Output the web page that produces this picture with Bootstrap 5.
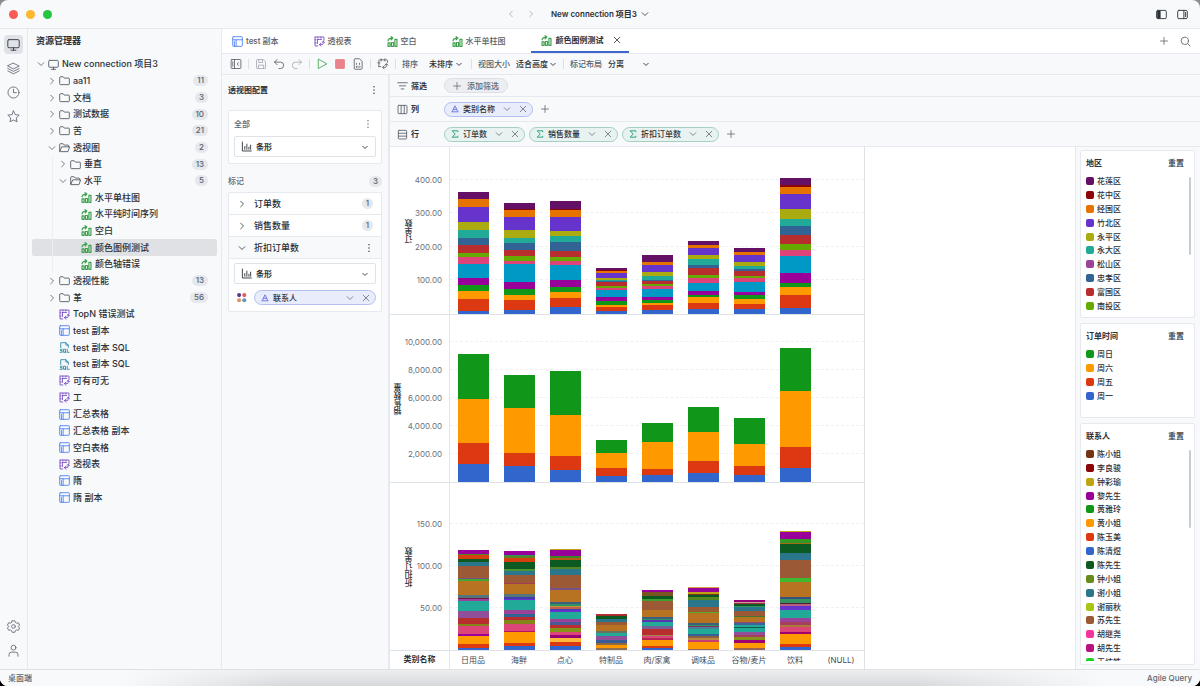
<!DOCTYPE html>
<html lang="zh-CN">
<head>
<meta charset="utf-8">
<meta name="viewport" content="width=device-width, initial-scale=1">
<title>Agile Query</title>
<link href="https://cdn.jsdelivr.net/npm/bootstrap@5.3.0/dist/css/bootstrap.min.css" rel="stylesheet">
<style>
:root{--panel:#f7f9fb;--line:#e6e9ed;--ink:#2b3038;--soft:#5f6670}
html,body{height:100%}
body{font:500 8px/12px Inter,"Noto Sans CJK SC",sans-serif;color:var(--ink);background:linear-gradient(#8b8b8b,#8b8b8b 50%,#000 50%);overflow:hidden}
button,select{font:inherit;color:inherit;border:0;background:none;padding:0}
.ic{width:11px;height:11px;flex:none;fill:none;stroke:currentColor;stroke-width:1.3;stroke-linecap:round;stroke-linejoin:round;display:block}
.ic-s{width:8px;height:8px;stroke-width:.8}.ic-l{width:13px;height:13px;stroke-width:1.1}
.app{height:100vh;background:var(--panel);border-radius:8px;overflow:hidden}
.line-b{border-bottom:1px solid var(--line)}.line-r{border-right:1px solid var(--line)}
.titlebar{height:29px;padding:0 12px 0 9px}
.titlebar nav{padding-right:9px}
.project{font-weight:600}
.faint{color:#a3a8b0}
.light{width:9px;height:9px;border-radius:50%}
.fw-b{font-weight:700}.soft{color:var(--soft)}
.side-w{flex:1 1 0}
.rail{width:28px;padding:6px 0 9px;gap:5px;color:#666c76}
.rail button{width:19px;height:19px;border-radius:4px;display:grid;place-items:center}
.rail .on{background:#dfe2e6;color:#30353d}
.explorer{width:194px;padding:6px 4px 0}
.explorer h2,.config h2,.legend h2{font-size:9px;font-weight:700;margin:0;line-height:12px}
.tree{display:grid;grid-auto-rows:1fr;height:450px;margin:9px 0 0}
.tree button{text-align:left;border-radius:2px;gap:3px;width:100%;position:relative;font-size:9px}
.tree .on{background:#dfe1e5}
.tree .deep::before{content:"";position:absolute;left:20px;top:0;bottom:0;border-left:1px solid #eceef1}
.tree .ic{color:#555b64}
.pill{background:#e5e8ec;border-radius:6px;color:#59606a;padding:0 4px;line-height:11px;font-size:8px;min-width:11px;text-align:center}
.tree .pill{margin-left:auto;margin-right:9px}
.c-blue{color:#4d82f3!important}.c-vio{color:#7a4fc4!important}.c-grn{color:#3da14c!important;stroke-width:1.7}.c-sql{color:#3289a5!important}
.tabs{height:25px;background:#fff}
#tabs>button{height:24px;gap:3px;padding:0 25px 0 10px;color:#565c66}
.tab-on{border-bottom:2px solid #3f68cf}
.tab-on button:first-child{gap:4px;height:22px;padding:0 9px 0 10px}
.tools{height:21px;color:#565c66;gap:6px;padding-left:8px}
.tools .ic{width:12px;height:12px;stroke-width:1.1}
.vsep{width:1px;height:10px;background:#dcdfe4}
.pick{appearance:none;-webkit-appearance:none;color:var(--ink);background:url("data:image/svg+xml,%3Csvg xmlns='http://www.w3.org/2000/svg' viewBox='0 0 8 8' fill='none' stroke='%23444a53'%3E%3Cpath d='M1.500 3L4 5.500L6.500 3'/%3E%3C/svg%3E") no-repeat right center/8px 8px}
#s1{width:34px;margin:0 2px 0 5px}#s2{width:41px}#s3{width:42px}
.config{width:168px;padding:9px 6px;border-right:2px solid var(--line)}
.config h2{font-size:8px}
.box{background:#fff;border:1px solid var(--line);border-radius:2px}
.field{position:relative}
.field .ic{position:absolute;left:7px;top:5px}
.field .pick{width:100%;height:21px;border:1px solid #dfe2e7;border-radius:2px;padding-left:21px;background-position:right 6px center;font-weight:600}
.mrow{height:22px;padding:0 8px 0 9px;border-bottom:1px solid var(--line);font-size:9px}
.shelf{padding:0 8px 0 7px;gap:4px;height:25px}
.shelf-low{height:22px}
.shelf-name{width:43px;gap:3px}
.tag{height:15px;border-radius:8px;border:1px solid;padding:0 5px 0 6px;gap:4px}
.tag-sum{background:#e8f3f1;border-color:#a5cfc5}.tag-dim{background:#e9edfb;border-color:#b3bff0}
.tag-add{background:#eceef2;border-color:#dcdfe5;padding:0 8px;gap:6px}
.tag .ic-s{color:#656c76}.tag .c-sum{color:#2fa37c;stroke-width:1}.tag .c-dim{color:#5560e0}
.chart{width:475px;border-right:1px solid #dfe1e5;color:#6a707a}
.facet{flex:1 1 0;min-height:0;border-bottom:1px solid #dfe1e5}
.axis{width:60px;padding-right:7px;border-right:1px solid #e4e6ea;font-weight:400}
.axis-name{writing-mode:vertical-rl;transform:rotate(180deg);color:var(--ink);font-weight:500}
.ticks{position:relative;width:27px;height:100%}.ticks.wide{width:38px}
.ticks span{position:absolute;right:0;transform:translateY(50%)}
.plot{position:relative;display:grid;grid-template-columns:repeat(9,1fr);flex:1}
.rule{position:absolute;left:0;right:0;border-top:1px dashed #eef0f2}
.rod{width:31px;align-self:end;justify-self:center;display:flex;flex-direction:column;position:relative}
.rod i{flex-basis:0;min-height:0}
.cats{height:18px}
.cats .axis{line-height:17px;padding:0;font-weight:600;color:var(--ink)}
.cats ol{display:grid;grid-template-columns:repeat(9,1fr);flex:1;color:#454b55;font-weight:400}
.legend{width:125px;padding:3px 5px 4px 4px;gap:5px;border-left:1px solid var(--line);background:var(--panel)}
.legend section{padding:6px 10px 3px 5px;position:relative}
.legend h2{font-size:8px}
.key-view{overflow:hidden;min-height:0;margin-top:5px}
.keys{display:grid;grid-auto-rows:1fr}
.keys li{gap:3px}
.sw{width:8px;height:8px;border-radius:2px;flex:none}
.thumb{position:absolute;right:3px;top:26px;width:2px;height:78px;border-radius:1px;background:#c9ccd1}
.status{height:17px;padding:0 8px;color:var(--soft);border-top:1px solid #dfe1e5;background:linear-gradient(90deg,#f8f9fb 10%,transparent 24%,transparent 76%,#f8f9fb 92%),linear-gradient(#eceef0,#d6d8db)}
</style>
</head>
<body>
<svg width="0" height="0" class="position-absolute">
<symbol id="down" viewBox="0 0 8 8"><path d="M1.2 2.700L4 5.500L6.800 2.700"/></symbol>
<symbol id="right" viewBox="0 0 8 8"><path d="M2.700 1.200L5.500 4L2.700 6.800"/></symbol>
<symbol id="left" viewBox="0 0 8 8"><path d="M5.300 1.200L2.500 4L5.300 6.800"/></symbol>
<symbol id="x" viewBox="0 0 8 8"><path d="M1.200 1.200L6.800 6.800M6.800 1.200L1.200 6.800"/></symbol>
<symbol id="plus" viewBox="0 0 8 8"><path d="M4 .5V7.500M.5 4H7.500"/></symbol>
<symbol id="monitor" viewBox="0 0 16 16"><rect x="1" y="2" width="14" height="10" rx="1.500"/><path d="M8 12v3M5 15h6"/></symbol>
<symbol id="layers" viewBox="0 0 16 16"><path d="M8 1.500L15 5L8 8.500L1 5ZM1 8L8 11.500L15 8M1 11L8 14.500L15 11"/></symbol>
<symbol id="clock" viewBox="0 0 16 16"><circle cx="8" cy="8" r="6.800"/><path d="M8 4V8.200H11.500"/></symbol>
<symbol id="star" viewBox="0 0 16 16"><path d="M8 1.200L10.100 5.700L15 6.300L11.400 9.700L12.300 14.600L8 12.200L3.700 14.600L4.600 9.700L1 6.300L5.900 5.700Z"/></symbol>
<symbol id="gear" viewBox="0 0 16 16"><path d="M6.300 1h3.400l.6 2 1.500.9 2.100-.5 1.600 2.800L14 7.700v.7l1.500 1.500-1.600 2.800-2.100-.5-1.500.9-.6 2H6.300l-.6-2-1.500-.9-2.100.5L.5 9.900 2 8.400v-.7L.5 6.200l1.600-2.800 2.100.5L5.700 3Z"/><circle cx="8" cy="8" r="2.300"/></symbol>
<symbol id="user" viewBox="0 0 16 16"><circle cx="8" cy="4.500" r="3"/><path d="M2.500 15V13a3 3 0 0 1 3-3h5a3 3 0 0 1 3 3v2"/></symbol>
<symbol id="folder" viewBox="0 0 16 16"><path d="M1 3.500a1 1 0 0 1 1-1h4l1.700 2H14a1 1 0 0 1 1 1V13a1 1 0 0 1-1 1H2a1 1 0 0 1-1-1Z"/></symbol>
<symbol id="open" viewBox="0 0 16 16"><path d="M1 13V3.500a1 1 0 0 1 1-1h4l1.700 2H13a1 1 0 0 1 1 1V7M1.200 13.500L4 7h11.500L13 14H2a1 1 0 0 1-1-1"/></symbol>
<symbol id="bars" viewBox="0 0 16 16"><path d="M1.500 10v5h3v-5ZM6.500 9.500V15h3V9.500ZM11.500 5V15h3V5ZM1.500 7C2 4 4 3 8 3M6 1L8.500 3L6 5.500"/></symbol>
<symbol id="pivot" viewBox="0 0 16 16"><path d="M1.500 1.500H14.500V6.500M1.500 1.500V14.500H5.500M5 5H11M5 5V11M1.500 5.500H3M1.500 10H3M5.500 1.500V3M10 1.500V3M8 12.500h3.500a2 2 0 0 0 2-2V8M10 10.500L8 12.500L10 14.800M11.500 9.500L13.500 7.500L15.300 9.500"/></symbol>
<symbol id="grid" viewBox="0 0 16 16"><rect x="1" y="1" width="14" height="14" rx="1"/><path d="M1 5.500H15M6 5.500V15M3.500 8V15"/></symbol>
<symbol id="sql" viewBox="0 0 16 16"><path d="M2.500 8V1H10L13.500 4.500V8M10 1V4.500H13.500M4.500 10.500H2v2H4.500V15H1.500M7 10.500H9.500V15H7ZM9 14L10 15.500M12 10.500V15H14.800"/></symbol>
<symbol id="side" viewBox="0 0 16 16"><rect x="1.500" y="2" width="13" height="12" rx="1"/><path d="M6 2V14M11.500 6L9.500 8L11.500 10M3.700 5V11"/></symbol>
<symbol id="save" viewBox="0 0 16 16"><path d="M2 3a1 1 0 0 1 1-1H11L14 5V13a1 1 0 0 1-1 1H3a1 1 0 0 1-1-1ZM5 2V6H10V2M4.500 14V9.500H11.500V14"/></symbol>
<symbol id="undo" viewBox="0 0 16 16"><path d="M5.500 2L2 5.500L5.500 9M2 5.500H10a4 4 0 0 1 0 8.500H8"/></symbol>
<symbol id="redo" viewBox="0 0 16 16"><path d="M10.500 2L14 5.500L10.500 9M14 5.500H6a4 4 0 0 0 0 8.500H8"/></symbol>
<symbol id="play" viewBox="0 0 16 16"><path d="M3 2V14L14 8Z"/></symbol>
<symbol id="stop" viewBox="0 0 16 16"><rect x="2" y="2" width="12" height="12" rx="1" fill="#e8838b" stroke="#e8838b"/></symbol>
<symbol id="doc" viewBox="0 0 16 16"><path d="M3 2a1 1 0 0 1 1-1H10L13.500 4.500V14a1 1 0 0 1-1 1H4a1 1 0 0 1-1-1ZM6 7V8.500M10 7V8.500M6 11V12.500M8 11V12.500M10.500 11V12.500"/></symbol>
<symbol id="swap" viewBox="0 0 16 16"><path d="M2.500 11.500V3.500a1 1 0 0 1 1-1H13a1 1 0 0 1 1 1V6M2.500 11.500H5M5.500 1V4M10.500 1V4M1 6.500H4M8 12.500h2.500a2 2 0 0 0 2-2V8M9.500 10.500L7.500 12.500L9.500 14.500M10.500 9.500L12.500 7.500L14.500 9.500"/></symbol>
<symbol id="funnel" viewBox="0 0 16 16"><path d="M1 4H15M3.500 8.500H12.500M6 13H10"/></symbol>
<symbol id="cols" viewBox="0 0 16 16"><rect x="1.500" y="2" width="13" height="12" rx="1"/><path d="M6 2V14M10.500 2V14"/></symbol>
<symbol id="rows" viewBox="0 0 16 16"><rect x="2" y="2" width="12" height="12.500" rx="1"/><path d="M2 6.200H14M2 10.400H14"/></symbol>
<symbol id="find" viewBox="0 0 16 16"><circle cx="7" cy="7" r="5.300"/><path d="M11 11L14.500 14.500"/></symbol>
<symbol id="dots" viewBox="0 0 8 8"><path stroke-width="1.400" d="M4 .8V.81M4 4V4.010M4 7.200V7.210"/></symbol>
<symbol id="hist" viewBox="0 0 16 16"><path d="M2 1.500V14.500H15M5.500 8V12M8.500 4.500V12M11.500 9V12M14 6V12"/></symbol>
<symbol id="sigma" viewBox="0 0 8 8"><path d="M6.800 1.800V.8H1.200L4.200 4L1.200 7.200H6.800V6.200"/></symbol>
<symbol id="alpha" viewBox="0 0 8 8"><path d="M1.500 6L4 .8L6.500 6M2.400 4.300H5.600M.8 6.800H7.200"/></symbol>
<symbol id="palette" viewBox="0 0 16 16"><g stroke="none"><circle cx="4.500" cy="4.500" r="3" fill="#5d3a87"/><circle cx="12" cy="4.500" r="3" fill="#e05b63"/><circle cx="4.500" cy="12" r="3" fill="#e0916c"/><circle cx="12" cy="12" r="3" fill="#5f9bb5"/></g></symbol>
<symbol id="winl" viewBox="0 0 16 16"><rect x="1" y="2" width="14" height="12" rx="2"/><path d="M2 3H6V13H2Z" fill="currentColor"/></symbol>
<symbol id="winr" viewBox="0 0 16 16"><rect x="1" y="2" width="14" height="12" rx="2"/><path d="M10 2V14M12.500 5V11"/></symbol>
</svg>

<div class="app d-flex flex-column">
  <header class="titlebar line-b d-flex align-items-center flex-shrink-0">
    <div class="d-flex side-w gap-1"><span class="light me-1" style="background:#fb5b57"></span><span class="light me-1" style="background:#fdb92b"></span><span class="light" style="background:#24c53f"></span></div>
    <nav class="d-flex align-items-center gap-2" aria-label="导航">
      <button class="me-1 faint" aria-label="后退"><svg class="ic ic-s"><use href="#left"/></svg></button>
      <button class="me-2 faint" aria-label="前进"><svg class="ic ic-s"><use href="#right"/></svg></button>
      <button class="project d-flex align-items-center gap-1">New connection 项目3<svg class="ic ic-s"><use href="#down"/></svg></button>
    </nav>
    <div class="side-w"></div>
    <div class="d-flex" style="gap:10px"><button aria-label="左侧栏"><svg class="ic"><use href="#winl"/></svg></button><button aria-label="右侧栏"><svg class="ic"><use href="#winr"/></svg></button></div>
  </header>

  <div class="d-flex flex-fill" style="min-height:0">
    <nav class="rail line-r d-flex flex-column align-items-center flex-shrink-0" aria-label="活动栏">
      <button class="on" aria-label="资源"><svg class="ic ic-l"><use href="#monitor"/></svg></button>
      <button aria-label="图层"><svg class="ic ic-l"><use href="#layers"/></svg></button>
      <button aria-label="历史"><svg class="ic ic-l"><use href="#clock"/></svg></button>
      <button aria-label="收藏"><svg class="ic ic-l"><use href="#star"/></svg></button>
      <button class="mt-auto" aria-label="设置"><svg class="ic ic-l"><use href="#gear"/></svg></button>
      <button aria-label="用户"><svg class="ic ic-l"><use href="#user"/></svg></button>
    </nav>

    <aside class="explorer line-r flex-shrink-0">
      <h2 class="px-1">资源管理器</h2>
      <ul class="tree list-unstyled" id="tree"></ul>
    </aside>

    <main class="d-flex flex-column flex-fill" style="min-width:0">
      <div class="tabs line-b d-flex align-items-center flex-shrink-0">
        <div class="d-flex" id="tabs"></div>
        <div class="d-flex ms-auto align-items-center" style="gap:12px;padding-right:9px"><button class="soft" aria-label="新建"><svg class="ic ic-s"><use href="#plus"/></svg></button><button class="soft" aria-label="搜索"><svg class="ic"><use href="#find"/></svg></button></div>
      </div>
      <div class="tools line-b d-flex align-items-center flex-shrink-0">
        <button aria-label="面板"><svg class="ic"><use href="#side"/></svg></button><span class="vsep"></span>
        <button class="faint" aria-label="保存"><svg class="ic"><use href="#save"/></svg></button>
        <button aria-label="撤销"><svg class="ic"><use href="#undo"/></svg></button>
        <button class="faint" aria-label="重做"><svg class="ic"><use href="#redo"/></svg></button><span class="vsep"></span>
        <button style="color:#3da14c" aria-label="运行"><svg class="ic"><use href="#play"/></svg></button>
        <button aria-label="停止"><svg class="ic"><use href="#stop"/></svg></button>
        <button aria-label="日志"><svg class="ic"><use href="#doc"/></svg></button><span class="vsep"></span>
        <button aria-label="转置"><svg class="ic"><use href="#swap"/></svg></button><span class="vsep"></span>
        <label for="s1">排序</label><select class="pick" id="s1"><option>未排序</option></select><span class="vsep"></span>
        <label for="s2">视图大小</label><select class="pick" id="s2"><option>适合高度</option></select><span class="vsep"></span>
        <label for="s3">标记布局</label><select class="pick" id="s3"><option>分离</option></select>
      </div>

      <div class="d-flex flex-fill" style="min-height:0">
        <aside class="config flex-shrink-0">
          <div class="d-flex justify-content-between align-items-center pe-1"><h2>透视图配置</h2><button aria-label="更多"><svg class="ic ic-s"><use href="#dots"/></svg></button></div>
          <div class="box" style="margin-top:14px;padding:7px 5px 6px">
            <div class="d-flex justify-content-between align-items-center pe-1 soft" style="margin-bottom:6px">全部<button aria-label="更多"><svg class="ic ic-s"><use href="#dots"/></svg></button></div>
            <div class="field"><svg class="ic"><use href="#hist"/></svg><select class="pick" aria-label="图形"><option>条形</option></select></div>
          </div>
          <div class="d-flex justify-content-between align-items-center soft" style="margin:11px 0 5px">标记<span class="pill">3</span></div>
          <div class="box">
            <div class="mrow d-flex align-items-center"><button class="d-flex align-items-center gap-2"><svg class="ic ic-s"><use href="#right"/></svg>订单数</button><span class="pill ms-auto">1</span></div>
            <div class="mrow d-flex align-items-center"><button class="d-flex align-items-center gap-2"><svg class="ic ic-s"><use href="#right"/></svg>销售数量</button><span class="pill ms-auto">1</span></div>
            <div class="mrow d-flex align-items-center" style="background:var(--panel)"><button class="d-flex align-items-center gap-2"><svg class="ic ic-s"><use href="#down"/></svg>折扣订单数</button><button class="ms-auto" aria-label="更多"><svg class="ic ic-s"><use href="#dots"/></svg></button></div>
            <div style="padding:4px 5px 6px">
              <div class="field"><svg class="ic"><use href="#hist"/></svg><select class="pick" aria-label="折扣图形"><option>条形</option></select></div>
              <div class="d-flex align-items-center" style="margin-top:6px;gap:7px;padding-left:2px">
                <svg class="ic"><use href="#palette"/></svg>
                <div class="tag tag-dim d-flex align-items-center flex-fill"><svg class="ic ic-s c-dim"><use href="#alpha"/></svg>联系人<button class="ms-auto" aria-label="选项"><svg class="ic ic-s"><use href="#down"/></svg></button><button class="ps-1" aria-label="移除"><svg class="ic ic-s"><use href="#x"/></svg></button></div>
              </div>
            </div>
          </div>
        </aside>

        <div class="d-flex flex-column flex-fill" style="min-width:0">
          <div class="shelf shelf-low line-b d-flex align-items-center flex-shrink-0"><div class="shelf-name d-flex align-items-center fw-b"><svg class="ic soft"><use href="#funnel"/></svg>筛选</div><button class="tag tag-add d-flex align-items-center soft"><svg class="ic ic-s"><use href="#plus"/></svg>添加筛选</button></div>
          <div class="shelf line-b d-flex align-items-center flex-shrink-0" id="shelfCol"></div>
          <div class="shelf line-b d-flex align-items-center flex-shrink-0" id="shelfRow"></div>
          <div class="d-flex flex-fill bg-white" style="min-height:0">
            <div class="chart d-flex flex-column flex-shrink-0" id="chart"></div>
            <aside class="legend ms-auto d-flex flex-column flex-shrink-0" id="legend"></aside>
          </div>
        </div>
      </div>
    </main>
  </div>
  <footer class="status d-flex justify-content-between align-items-center flex-shrink-0"><span>桌面端</span><span>Agile Query</span></footer>
</div>

<script src="https://cdn.jsdelivr.net/npm/bootstrap@5.3.0/dist/js/bootstrap.bundle.min.js"></script>
<script>
const $ = id => document.getElementById(id);
const icon = (n, c = '') => `<svg class="ic ${c}"><use href="#${n}"/></svg>`;

// level, state, icon, label, count
const nodes = [
 [0,'down','monitor','New connection 项目3'],[1,'right','folder','aa11',11],[1,'right','folder','文档',3],[1,'right','folder','测试数据',10],[1,'right','folder','苦',21],
 [1,'down','open','透视图',2],[2,'right','folder','垂直',13],[2,'down','open','水平',5],[3,'','bars','水平单柱图'],[3,'','bars','水平纯时间序列'],[3,'','bars','空白'],[3,'','bars','颜色图例测试'],[3,'','bars','颜色轴错误'],
 [1,'right','folder','透视性能',13],[1,'right','folder','革',56],[1,'','pivot','TopN 错误测试'],[1,'','grid','test 副本'],[1,'','sql','test 副本 SQL'],[1,'','sql','test 副本 SQL'],
 [1,'','pivot','可有可无'],[1,'','pivot','工'],[1,'','grid','汇总表格'],[1,'','grid','汇总表格 副本'],[1,'','grid','空白表格'],[1,'','pivot','透视表'],[1,'','grid','隋'],[1,'','grid','隋 副本']];
const tint = {bars:'c-grn',pivot:'c-vio',grid:'c-blue',sql:'c-sql'};
$('tree').innerHTML = nodes.map(([l,s,i,t,n]) => `<li class="d-flex"><button class="d-flex align-items-center ${l>1?'deep':''} ${t==='颜色图例测试'?'on':''}" style="padding-left:${5+11*l}px">${s?icon(s,'ic-s'):'<span class="ic ic-s"></span>'}${icon(i,tint[i]||'')}<span>${t}</span>${n?`<span class="pill">${n}</span>`:''}</button></li>`).join('');

$('tabs').innerHTML = [['grid','test 副本'],['pivot','透视表'],['bars','空白'],['bars','水平单柱图']].map(([i,t]) => `<button class="d-flex align-items-center">${icon(i,tint[i])}${t}</button>`).join('')
 + `<div class="tab-on d-flex align-items-center fw-b"><button class="d-flex align-items-center">${icon('bars','c-grn')}颜色图例测试</button><button class="pe-2" aria-label="关闭">${icon('x','ic-s')}</button></div>`;

const tag = (k,t) => `<div class="tag tag-${k} d-flex align-items-center">${icon(k==='sum'?'sigma':'alpha','ic-s c-'+k)}<span>${t}</span><button class="ps-1" aria-label="选项">${icon('down','ic-s')}</button><button class="ps-1" aria-label="移除">${icon('x','ic-s')}</button></div>`;
const shelf = (i,n,tags) => `<div class="shelf-name d-flex align-items-center fw-b">${icon(i,'soft')}${n}</div>${tags.join('')}<button class="ps-1" aria-label="添加">${icon('plus','ic-s soft')}</button>`;
$('shelfCol').innerHTML = shelf('cols','列',[tag('dim','类别名称')]);
$('shelfRow').innerHTML = shelf('rows','行',['订单数','销售数量','折扣订单数'].map(t => tag('sum',t)));

// Stacked series, top segment first; each list holds the segment edges
const region = '651067 8b0707 e67300 6633cc aaaa11 22aa99 316395 b82e2e 66aa00 dd4477 0099c6 990099 109618 ff9900 dc3912 3366cc'.split(' ');
const week = '109618 ff9900 dc3912 3366cc'.split(' ');
const f1 = {base:522, rods:[
 [155,176,178,200,245,269,293,314,339,351,372,414,436,454,478,514,522],
 [189,207,211,232,271,293,310,330,348,363,372,426,446,466,480,509,522],
 [184,208,211,231,272,288,307,332,351,364,375,421,440,456,475,501,522],
 [384,391,393,399,413,420,422,426,438,443,449,472,483,495,501,513,522],
 [346,365,367,376,397,408,420,423,433,437,446,471,481,489,495,510,522],
 [303,314,315,324,345,357,375,383,405,415,428,453,466,471,489,507,522],
 [324,335,336,344,366,378,388,394,408,413,425,456,466,478,492,508,522],
 [113,136,140,161,206,236,258,285,311,330,348,399,428,440,465,505,522]].map(a => a.map((y,i) => [y, region[i]]))};
const f2 = {base:486, rods:[[102,236,369,431,486],[165,265,400,437,486],[153,286,407,449,486],[360,400,443,467,486],[309,366,447,465,486],[262,336,423,459,486],[294,372,438,465,486],[85,213,381,444,486]].map(a => a.map((y,i) => [y, week[i]]))};
const P = s => s.split(' ').map(v => v.split(':')).map(([y,c]) => [+y,c]);
const f3 = {base:450, rods:[
 '150:990099 163:558822 166:d6400f 176:0c5922 186:2a778d 198:9c5935 235:76518a 238:3fa92f 244:b77322 286:55747c 293:7a1050 298:994499 304:22aa99 334:8f4f99 354:b82e2e 371:84841b 377:dd4477 402:990099 409:ff9900 433:dc3912 445:3366cc 450:',
 '153:990099 165:329262 168:558822 174:d6400f 186:0c5922 208:4c9435 214:2a778d 224:9c5935 249:a33c57 252:b77322 283:55747c 291:3b3eac 296:6633cc 300:22aa99 331:994499 342:316395 352:b82e2e 361:84841b 371:dd4477 394:b81365 397:ff9900 430:dc3912 437:3366cc 450:',
 '147:bea413 151:990099 167:3c8922 174:b55a15 180:0c5922 201:558822 208:2a778d 226:9c5935 264:76518a 269:b77322 306:3b6080 312:329262 318:b99a3a 322:c06050 327:3b3eac 331:6633cc 337:22aa99 357:994499 367:4b5a96 374:b82e2e 384:84941b 395:dd4477 405:990077 414:ffb93a 425:dc3912 437:3366cc 450:',
 '342:b82e2e 346:a03030 349:0c5922 356:2a778d 367:9c5935 375:b77322 394:667560 398:22aa99 409:8f4f99 420:385c95 429:8f6a40 434:ff9900 445:8f7050 450:',
 '270:990099 277:7a5520 287:0c5922 297:3fa030 304:9c5935 330:b77322 352:3b6080 356:329262 360:5a35b0 367:22aa99 379:75609a 388:b82e2e 405:9a8a50 408:dd4477 415:b82355 420:ff9900 438:dc3912 444:3366cc 450:',
 '261:d8a440 264:990099 276:bea413 281:7a3520 284:0c5922 291:558822 300:2a778d 322:9c5935 336:5aa92f 340:b77322 370:3b6080 374:329262 378:803060 382:4c7f99 387:22aa99 403:316395 409:8f5f49 413:b88840 419:c94070 426:ff9900 446:996655 450:',
 '300:990077 305:c5a099 308:a03040 312:0c5922 317:329262 321:2a778d 334:9c5935 348:3f792f 351:b77322 366:8f5070 370:4060a0 375:22aa99 381:105a52 384:22aa99 395:8f4f99 404:a83e5e 411:84941b 421:a00070 430:ff9900 445:996655 450:',
 '94:bea413 97:990099 117:329922 128:a56a15 131:0c5922 160:2a778d 180:9c5935 234:3fb92f 245:b77322 291:3b4e80 297:329262 308:502030 312:b86080 318:6633cc 331:22aa99 354:994499 365:a83e5e 376:a87a3b 382:dd4477 396:a00070 402:ff9900 433:dc3912 442:3366cc 450:'].map(P)};
const FULL = 501; // height of a facet in edge units
const rod = (a,base) => `<div class="rod" style="height:${((base-a[0][0])/FULL*100).toFixed(2)}%">${a.slice(0,-1).map(([y,c],i) => `<i style="flex-grow:${a[i+1][0]-y};background:#${c}"></i>`).join('')}</div>`;
const facet = (name,f,ticks,unit,wide) => `<div class="facet d-flex"><div class="axis d-flex justify-content-end align-items-center flex-shrink-0"><span class="axis-name">${name}</span><div class="ticks ${wide}">${ticks.map((t,i) => `<span style="bottom:${(i+1)*unit}%">${t}</span>`).join('')}</div></div><div class="plot">${ticks.map((t,i) => `<div class="rule" style="bottom:${(i+1)*unit}%"></div>`).join('')}${f.rods.map(r => rod(r,f.base)).join('')}</div></div>`;
$('chart').innerHTML = facet('订单数',f1,['100.00','200.00','300.00','400.00'],20.1,'')
 + facet('销售数量',f2,['2,000.00','4,000.00','6,000.00','8,000.00','10,000.00'],16.77,'wide')
 + facet('折扣订单数',f3,['50.00','100.00','150.00'],25.15,'')
 + `<div class="cats d-flex align-items-center flex-shrink-0"><div class="axis flex-shrink-0 text-center h-100">类别名称</div><ol class="list-unstyled m-0 text-center">${['日用品','海鲜','点心','特制品','肉/家禽','调味品','谷物/麦片','饮料','(NULL)'].map(c => `<li class="text-nowrap">${c}</li>`).join('')}</ol></div>`;

const groups = [
 ['地区',168,139,'花莲区:651067 花中区:8b0707 经国区:e67300 竹北区:6633cc 永平区:aaaa11 永大区:22aa99 松山区:994499 忠孝区:316395 富国区:b82e2e 南投区:66aa00',1],
 ['订单时间',95,56,'周日:109618 周六:ff9900 周五:dc3912 周一:3366cc',0],
 ['联系人',0,222,'陈小姐:743411 李良骏:8b0707 钟彩瑜:bea413 黎先生:990099 黄雅玲:109618 黄小姐:ff9900 陈玉美:dc3912 陈清煜:3366cc 陈先生:0c5922 钟小姐:668d1c 谢小姐:2a778d 谢丽秋:a9c413 苏先生:9c5935 胡继尧:f4359e 胡先生:b91383 王炫皓:16d620',1]];
$('legend').innerHTML = groups.map(([t,h,k,s,b]) => `<section class="box d-flex flex-column ${h?'flex-shrink-0':''}" style="${h?`height:${h}px`:'flex:1 1 0;min-height:0'}"><div class="d-flex justify-content-between align-items-center"><h2>${t}</h2><button>重置</button></div><div class="key-view"><ul class="keys list-unstyled mb-0" style="height:${k}px">${s.split(' ').map(v => v.split(':')).map(([n,c]) => `<li class="d-flex align-items-center"><span class="sw" style="background:#${c}"></span>${n}</li>`).join('')}</ul></div>${b?'<span class="thumb"></span>':''}</section>`).join('');
</script>
</body>
</html>
